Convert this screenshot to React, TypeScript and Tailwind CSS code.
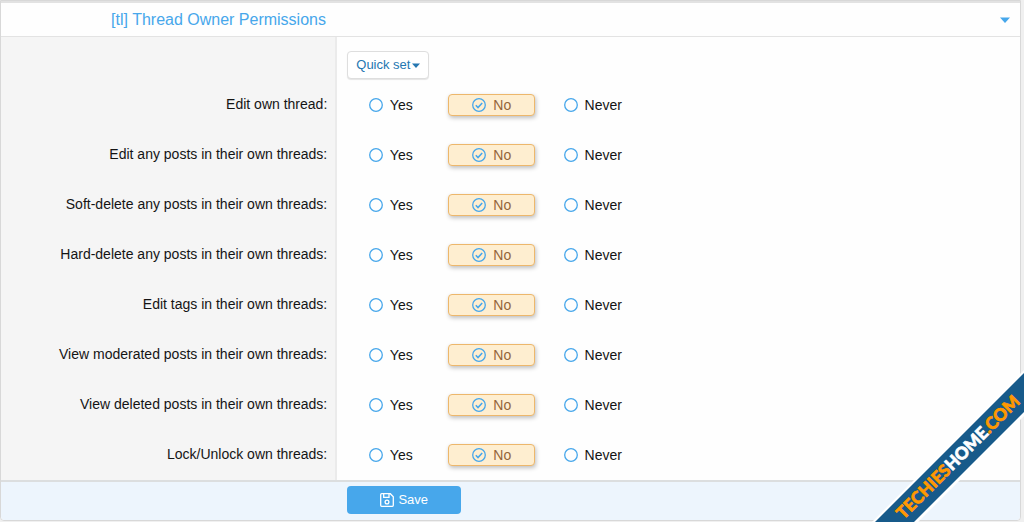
import React, { useState } from 'react';

type Value = 'Yes' | 'No' | 'Never';

const values: Value[] = ['Yes', 'No', 'Never'];

const permissions = [
  { id: 'edit-thread', name: 'Edit own thread:' },
  { id: 'edit-posts', name: 'Edit any posts in their own threads:' },
  { id: 'soft-delete', name: 'Soft-delete any posts in their own threads:' },
  { id: 'hard-delete', name: 'Hard-delete any posts in their own threads:' },
  { id: 'edit-tags', name: 'Edit tags in their own threads:' },
  { id: 'view-moderated', name: 'View moderated posts in their own threads:' },
  { id: 'view-deleted', name: 'View deleted posts in their own threads:' },
  { id: 'lock-unlock', name: 'Lock/Unlock own threads:' },
];

function Caret({ className }: { className: string }) {
  return (
    <svg viewBox="0 0 10 6" className={className} fill="currentColor" aria-hidden="true">
      <path d="M0 0.5h10L5 6z" />
    </svg>
  );
}

interface OptionProps {
  group: string;
  value: Value;
  checked: boolean;
  onChange: () => void;
}

function Option({ group, value, checked, onChange }: OptionProps) {
  return (
    <label
      className={`flex h-[22px] w-[87px] cursor-pointer items-center justify-center gap-[7px] rounded border text-sm ${
        checked ? 'border-[#edb76b] bg-[#feeed0] text-[#94653a] shadow-[1px_2px_4px_rgba(0,0,0,0.25)]' : 'border-transparent text-[#141414]'
      }`}
    >
      <span className="grid size-3.5 shrink-0 place-items-center text-[#47a7eb]">
        <input
          type="radio"
          name={group}
          value={value}
          checked={checked}
          onChange={onChange}
          className="col-start-1 row-start-1 size-3.5 appearance-none rounded-full"
        />
        <svg viewBox="0 0 14 14" className="pointer-events-none col-start-1 row-start-1 size-3.5" fill="none" stroke="currentColor" strokeWidth="1.3" aria-hidden="true">
          <circle cx="7" cy="7" r="6.3" />
          {checked && <path d="M3.8 7.3l2.2 2.200 4.200-4.500" strokeWidth="1.6" />}
        </svg>
      </span>
      {value}
    </label>
  );
}

function Ribbon() {
  return (
    <svg viewBox="0 0 160 160" className="pointer-events-none absolute right-0 bottom-0 size-40" aria-label="TechiesHome.com">
      <path d="M4 164L164 4V50L50 164z" fill="#fff" />
      <path d="M7 164L164 7V46L46 164z" fill="#175a8a" />
      <text
        transform="translate(94 95) rotate(-45)"
        y="6"
        textAnchor="middle"
        className="font-['Lato',sans-serif] text-[17px] font-black"
        fill="#ff9800"
        stroke="#ff9800"
        strokeWidth="0.7"
      >
        TECHIES<tspan fill="#fff" stroke="#fff">HOME</tspan>.COM
      </text>
    </svg>
  );
}

export default function App() {
  const [selected, setSelected] = useState<Record<string, Value>>({});

  return (
    <div className="relative min-h-screen overflow-hidden bg-[#f0f0f0] pr-[3px] pb-px font-['Liberation_Sans',Arial,sans-serif]">
      <form
        className="rounded-b border border-[#d8d8d8] bg-[#fefefe]"
        onSubmit={(e) => e.preventDefault()}
      >
        {/* Section header */}
        <h3 className="border-t-2 border-b border-t-[#e2e2e2] border-b-[#e3e3e3]">
          <button type="button" className="flex h-[33px] w-full cursor-pointer items-center justify-between pr-2.5 text-base text-[#47a7eb]">
            <span className="w-[33%] pr-2 text-right whitespace-nowrap">[tl] Thread Owner Permissions</span>
            <Caret className="h-1.5 w-2.5" />
          </button>
        </h3>

        {/* Quick set */}
        <div className="flex">
          <div className="w-[33%] border-r-2 border-[#ebebeb] bg-[#f5f5f5]" />
          <div className="flex-1 px-2.5 pt-3.5 pb-px">
            <button
              type="button"
              className="flex h-7 cursor-pointer items-center gap-0.5 rounded border border-[#dedede] bg-white px-2 text-[13px] text-[#2577b1] shadow-[0_1px_1px_rgba(0,0,0,0.1)]"
            >
              Quick set
              <Caret className="h-[5px] w-2" />
            </button>
          </div>
        </div>

        {permissions.map((permission) => (
          <div key={permission.id} className="flex h-[50px]">
            <div
              id={permission.id}
              className="flex w-[33%] items-center justify-end border-r-2 border-[#ebebeb] bg-[#f5f5f5] pr-2 pb-0.5 text-sm whitespace-nowrap text-[#141414]"
            >
              {permission.name}
            </div>
            <div role="radiogroup" aria-labelledby={permission.id} className="flex flex-1 items-center gap-3.5 px-2.5">
              {values.map((value) => (
                <Option
                  key={value}
                  group={permission.id}
                  value={value}
                  checked={(selected[permission.id] ?? 'No') === value}
                  onChange={() => setSelected({ ...selected, [permission.id]: value })}
                />
              ))}
            </div>
          </div>
        ))}

        {/* Submit row */}
        <div className="flex rounded-b border-t-2 border-[#dcdedf] bg-[#edf5fd] pt-1 pb-1.5">
          <div className="w-[33%]" />
          <div className="flex-1 px-2.5">
            <button
              type="submit"
              className="flex h-7 w-[114px] cursor-pointer items-center justify-center gap-1 rounded bg-[#47a7eb] text-[13px] text-white"
            >
              <svg viewBox="0 0 14 14" className="size-3.5" fill="none" stroke="currentColor" strokeWidth="1.3" aria-hidden="true">
                <path d="M.7 1.700q0-1 1-1h8.600l3 3v8.600q0 1-1 1H1.700q-1 0-1-1zM3.700.7v3.600h5.300V.7" />
                <circle cx="7" cy="9" r="1.900" />
              </svg>
              Save
            </button>
          </div>
        </div>
      </form>

      <Ribbon />
    </div>
  );
}
